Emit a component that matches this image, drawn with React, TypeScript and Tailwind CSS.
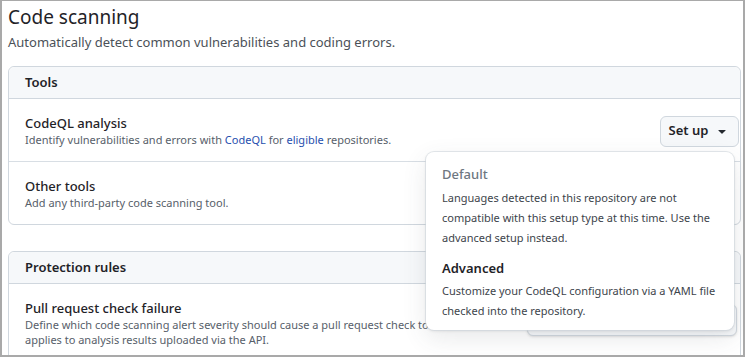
import { ChevronDown } from "lucide-react";

function Caret() {
    return (
        <svg viewBox="0 0 16 16" className="h-4 w-4 fill-current text-[#24292f]">
            <path d="M4.427 7.427l3.396 3.396a.25.25 0 00.354 0l3.396-3.396A.25.25 0 0011.396 7H4.604a.25.25 0 00-.177.427z" />
        </svg>
    );
}

export default function App() {
    return (
        <div className="relative h-[357px] w-[745px] overflow-hidden border-l-2 border-r-2 border-t border-b-2 border-[#a9a9a9] bg-white pl-[6px] pr-[2px] font-['Noto_Sans',sans-serif] text-[#1f2328]">
            <h1 className="pt-[2px] text-[19px] leading-[28px]">Code scanning</h1>
            <p className="mt-[1px] text-[13px] leading-[20px] text-[#4b5158]">
                Automatically detect common vulnerabilities and coding errors.
            </p>

            {/* Tools */}
            <div className="mt-[14px] rounded-md border border-[#d0d7de]">
                <div className="flex h-[32px] items-center rounded-t-md border-b border-[#d0d7de] bg-[#f6f8fa] px-4 text-[13px] font-semibold">
                    Tools
                </div>
                <div className="flex items-center justify-between border-b border-[#d8dee4] pb-[13px] pl-4 pr-[1px] pt-[15px]">
                    <div>
                        <div className="text-[13px] font-medium leading-[18px]">CodeQL analysis</div>
                        <div className="text-[11px] leading-[16px] text-[#57606a]">
                            Identify vulnerabilities and errors with{" "}
                            <span className="text-[#1f4fae]">CodeQL</span> for{" "}
                            <span className="text-[#1f4fae]">eligible</span> repositories.
                        </div>
                    </div>
                    <button className="flex h-[31px] w-[79px] items-center justify-center gap-[6px] rounded-md border border-[#d0d7de] bg-[#f6f8fa] text-[13px] font-semibold">
                        Set up
                        <Caret />
                    </button>
                </div>
                <div className="pb-[13px] pl-4 pt-[15px]">
                    <div className="text-[13px] font-medium leading-[18px]">Other tools</div>
                    <div className="text-[11px] leading-[16px] text-[#57606a]">
                        Add any third-party code scanning tool.
                    </div>
                </div>
            </div>

            {/* Protection rules */}
            <div className="mt-[26px] rounded-t-md border border-[#d0d7de]">
                <div className="flex h-[32px] items-center rounded-t-md border-b border-[#d0d7de] bg-[#f6f8fa] px-4 text-[13px] font-semibold">
                    Protection rules
                </div>
                <div className="flex items-start justify-between pb-4 pl-4 pr-[3px] pt-[16px]">
                    <div>
                        <div className="text-[13px] font-medium leading-[17px]">Pull request check failure</div>
                        <div className="text-[11px] leading-[15px] text-[#57606a]">
                            Define which code scanning alert severity should cause a pull request check to fail. This also
                            <br />
                            applies to analysis results uploaded via the API.
                        </div>
                    </div>
                    <button className="mt-[4px] flex h-[32px] w-[210px] shrink-0 items-center justify-between rounded-md border border-[#d0d7de] bg-[#f6f8fa] px-3 text-[13px] shadow-sm">
                        High or higher
                        <ChevronDown className="h-4 w-4" />
                    </button>
                </div>
            </div>

            {/* Setup dropdown */}
            <div className="absolute left-[424px] top-[151px] w-[308px] rounded-lg bg-white px-4 pb-[9px] pt-[12px] shadow-[0_1px_3px_rgba(31,35,40,0.12),0_8px_24px_rgba(66,74,83,0.12)] ring-1 ring-[#d0d7de]/60">
                <div className="text-[13px] font-medium leading-[20px] text-[#6e7781]">Default</div>
                <p className="mt-[4px] text-[11px] leading-[20px] text-[#3d444b]">
                    Languages detected in this repository are not
                    <br />
                    compatible with this setup type at this time. Use the
                    <br />
                    advanced setup instead.
                </p>
                <div className="mt-[10px] text-[13px] font-semibold leading-[20px]">Advanced</div>
                <p className="mt-[3px] text-[11px] leading-[20px] text-[#3d444b]">
                    Customize your CodeQL configuration via a YAML file
                    <br />
                    checked into the repository.
                </p>
            </div>
        </div>
    );
}
